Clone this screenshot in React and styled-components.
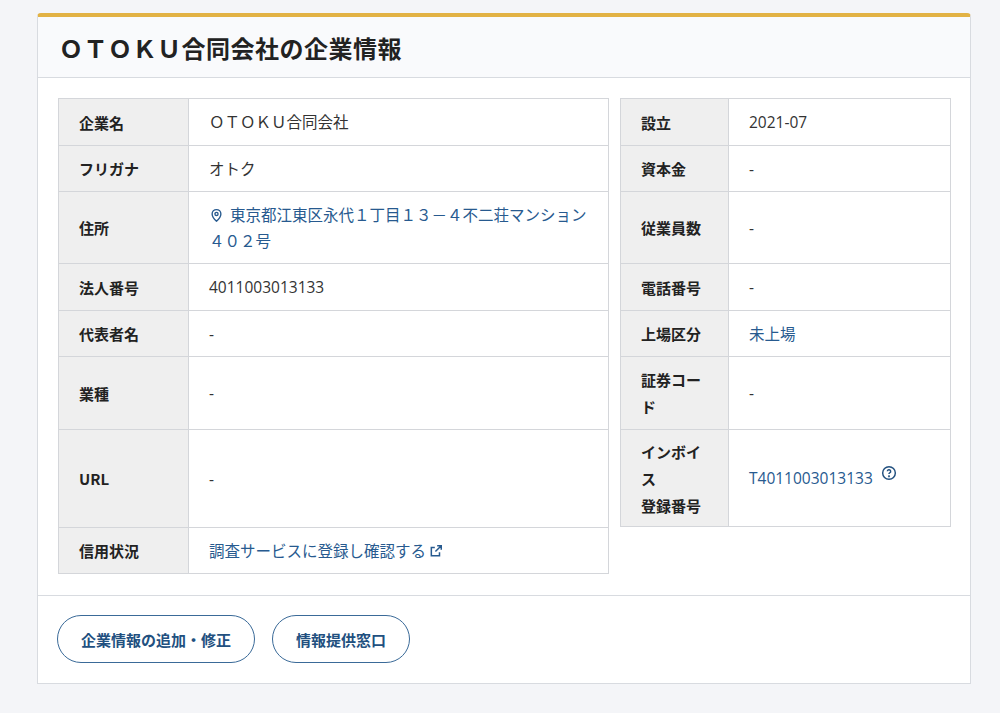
import React from "react";
import styled, { createGlobalStyle } from "styled-components";

const Global = createGlobalStyle`
  *, *::before, *::after { box-sizing: border-box; }
  body { margin:0; background:#f4f5f8; font-family: "Open Sans", "Noto Sans CJK JP", sans-serif; color:#222; }
`;
const Page = styled.div`padding:13px 29px 30px 37px;`;
const Card = styled.div`
  background:#fff; border:1px solid #d8dbe0; border-top:4px solid #e2b244; border-radius:4px 4px 0 0;
`;
const Header = styled.div`
  height:61px; display:flex; align-items:center; padding:0 21px; background:#f9fafc; border-bottom:1px solid #d8dbe0;
`;
const Title = styled.h1`margin:0; font-size:24px; font-weight:700; letter-spacing:0.5px; color:#222; font-family:"Noto Sans CJK JP", sans-serif;`;
const Body = styled.div`
  padding:20px 20px 21px; display:grid; grid-template-columns:551px 331px; gap:11px; align-items:start;
`;
const Table = styled.div`border:1px solid #d4d6da; border-bottom:none;`;
const Row = styled.div`
  display:grid; grid-template-columns:${p => p.$lw}px 1fr; height:${p => p.$h}px; border-bottom:1px solid #d4d6da;
`;
const Label = styled.div`
  background:#efefef; border-right:1px solid #d4d6da; display:flex; align-items:center;
  padding:0 20px; font-size:15px; font-weight:700; line-height:27px; font-family:"Noto Sans CJK JP", sans-serif;
`;
const Value = styled.div`
  display:flex; align-items:center; padding:0 20px; font-size:15.5px; line-height:26px;
  color:${p => p.$link ? "#275a8f" : "#333"};
`;
const Footer = styled.div`
  border-top:1px solid #d8dbe0; padding:19px 19px 20px; display:flex; gap:17px;
`;
const Btn = styled.button`
  height:48px; padding:0 23px; border-radius:24px; border:1.5px solid #3a6a98; background:#fff;
  color:#22507f; font-weight:700; font-size:15px; font-family:"Noto Sans CJK JP", sans-serif;
`;

const Pin = () => (
  <svg width="15" height="15" viewBox="0 0 24 24" fill="none" stroke="#275a8f" strokeWidth="2.2" style={{marginRight:6, verticalAlign:"-2px"}}>
    <path d="M12 21s-7-6.2-7-11.5a7 7 0 0 1 14 0C19 14.8 12 21 12 21z"/><circle cx="12" cy="9.5" r="2.5"/>
  </svg>
);
const Ext = () => (
  <svg width="14" height="14" viewBox="0 0 24 24" fill="none" stroke="#275a8f" strokeWidth="2.6" style={{marginLeft:3}}>
    <path d="M14 3h7v7M21 3l-10 10M18 14v6H4V6h6"/>
  </svg>
);
const Q = () => (
  <svg width="16" height="16" viewBox="0 0 24 24" fill="none" stroke="#22507f" strokeWidth="2.2" style={{marginLeft:8, marginTop:-10}}>
    <circle cx="12" cy="12" r="9.5"/><path d="M9.5 9.5a2.5 2.5 0 1 1 3.5 2.3c-.7.3-1 .9-1 1.7"/><circle cx="12" cy="17" r=".6" fill="#22507f"/>
  </svg>
);

const left = [
  ["企業名", "ＯＴＯＫＵ合同会社", 47],
  ["フリガナ", "オトク", 46],
  ["住所", <span><Pin />東京都江東区永代１丁目１３－４不二荘マンション４０２号</span>, 72, true],
  ["法人番号", "4011003013133", 47],
  ["代表者名", "-", 46],
  ["業種", "-", 73],
  ["URL", "-", 98],
  ["信用状況", <>調査サービスに登録し確認する<Ext /></>, 46, true],
];
const right = [
  ["設立", "2021-07", 47],
  ["資本金", "-", 46],
  ["従業員数", "-", 72],
  ["電話番号", "-", 47],
  ["上場区分", "未上場", 46, true],
  ["証券コード", "-", 73],
  ["インボイス 登録番号", <>T4011003013133<Q /></>, 97, true],
];

export default function App() {
  return (
    <Page>
      <Global />
      <Card>
        <Header><Title>ＯＴＯＫＵ合同会社の企業情報</Title></Header>
        <Body>
          <Table>
            {left.map(([l, v, h, link]) => (
              <Row key={l} $lw={130} $h={h}>
                <Label>{l}</Label>
                <Value $link={link}>{v}</Value>
              </Row>
            ))}
          </Table>
          <Table>
            {right.map(([l, v, h, link]) => (
              <Row key={l} $lw={108} $h={h}>
                <Label>{l === "インボイス 登録番号" ? <span>インボイ<br/>ス<br/>登録番号</span> : l === "証券コード" ? <span>証券コー<br/>ド</span> : l}</Label>
                <Value $link={link}>{v}</Value>
              </Row>
            ))}
          </Table>
        </Body>
        <Footer>
          <Btn>企業情報の追加・修正</Btn>
          <Btn>情報提供窓口</Btn>
        </Footer>
      </Card>
    </Page>
  );
}
